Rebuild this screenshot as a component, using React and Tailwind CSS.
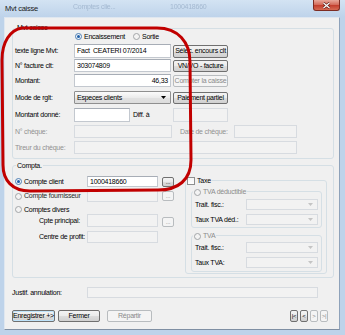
const BTN = "flex items-center justify-center whitespace-nowrap rounded-[2px] border border-[#707070] bg-[linear-gradient(#f3f3f3_0%,#ebebeb_50%,#dddddd_51%,#d0d0d0_100%)] text-black";
const BTN_DIS = "flex items-center justify-center whitespace-nowrap rounded-[2px] border border-[#b8bcbf] bg-[#f4f4f4] text-[#8a8a8a]";
const INPUT = "flex items-center bg-white border border-[#c3c8cf] border-t-[#a7adb6] px-[2px] whitespace-nowrap overflow-hidden";
const INPUT_DIS = "bg-[#f2f2f2] border border-[#d7dbe0]";

function Radio({ checked }) {
  if (checked) {
    return (
      <span className="w-[7px] h-[7px] shrink-0 rounded-full border border-[#4f7fb3] bg-[#eef3f8] flex items-center justify-center">
        <span className="w-[3px] h-[3px] rounded-full bg-[#1f5fa8]" />
      </span>
    );
  }
  return <span className="w-[7px] h-[7px] shrink-0 rounded-full border border-[#a2a5a8] bg-[#f3f3f3]" />;
}

function Arrow({ disabled }) {
  return (
    <svg width="5" height="3" viewBox="0 0 5 3" className="shrink-0">
      <path d="M0 0 L5 0 L2.5 3 Z" fill={disabled ? "#c4c4c4" : "#000"} />
    </svg>
  );
}

export default function App() {
  return (
    <div className="relative w-[345px] h-[335px] overflow-hidden bg-[#bed3ea] flex flex-col font-['Liberation_Sans',Arial,sans-serif] text-[7px] leading-[8px] tracking-[-0.25px] text-black">
      {/* title bar */}
      <div className="h-[17px] shrink-0 flex items-start bg-[linear-gradient(#d3e3f3,#bed3ea)]">
        <div className="w-[73px] pl-[5px] pt-[5px] text-[7.5px] text-[#1a1a1a]">Mvt caisse</div>
        <div className="w-[97px] pt-[3px] text-[#a3b8d0] blur-[0.6px]">Comptes clie...</div>
        <div className="pt-[3px] text-[#a3b8d0] blur-[0.6px]">1000418660</div>
        <div className="ml-auto mr-[5px] w-[27px] h-[11px] rounded-b-[3px] border border-t-0 border-[#7d2c22] bg-[linear-gradient(#e8a89a,#d56e5d_45%,#c3402f_55%,#d66b53)] flex items-center justify-center">
          <svg width="9" height="7" viewBox="0 0 9 7">
            <path d="M1.5 1 L7.5 6 M7.5 1 L1.5 6" stroke="#5a1d15" strokeWidth="2.6" />
            <path d="M1.5 1 L7.5 6 M7.5 1 L1.5 6" stroke="#ffffff" strokeWidth="1.3" />
          </svg>
        </div>
      </div>

      {/* client area */}
      <div className="ml-[4px] mr-[5px] h-[313px] shrink-0 bg-[#f0f0f0] border border-[#dfe7f0] border-b-[#7f8fa3] border-r-[#8ea2ba] flex flex-col">
        {/* Mvt caisse group */}
        <div className="ml-[7px] mt-[10px] w-[322px] h-[131px] shrink-0 border border-[#d5dfe5] rounded-[3px] flex flex-col">
          <div className="-mt-[5px] ml-[3px] w-fit px-[1px] h-[8px] bg-[#f0f0f0]">Mvt caisse</div>
          <div className="h-[9px] flex items-center pl-[62px]">
            <div className="w-[58px] flex items-center gap-[2px]">
              <Radio checked />
              <span>Encaissement</span>
            </div>
            <div className="flex items-center gap-[2px]">
              <Radio />
              <span>Sortie</span>
            </div>
          </div>

          <div className="mt-[3px] h-[14px] flex items-center pl-[2px]">
            <div className="w-[59px]">texte ligne Mvt:</div>
            <div className={INPUT + " w-[97px] h-[14px]"}>Fact&nbsp; CEATERI 07/2014</div>
            <div className={BTN + " ml-[2px] w-[55px] h-[13px]"}>Sélec. encours clt</div>
          </div>

          <div className="mt-[1px] h-[13px] flex items-center pl-[2px]">
            <div className="w-[59px]">N° facture clt:</div>
            <div className={INPUT + " w-[97px] h-[13px]"}>303074809</div>
            <div className={BTN + " ml-[2px] w-[55px] h-[12px]"}>VN/VO - facture</div>
          </div>

          <div className="mt-[2px] h-[13px] flex items-center pl-[2px]">
            <div className="w-[59px]">Montant:</div>
            <div className={INPUT + " w-[97px] h-[13px] justify-end"}>46,33</div>
            <div className={BTN_DIS + " ml-[2px] w-[55px] h-[12px]"}>Compter la caisse</div>
          </div>

          <div className="mt-[4px] h-[13px] flex items-center pl-[2px]">
            <div className="w-[59px]">Mode de rglt:</div>
            <div className="w-[97px] h-[13px] flex items-center justify-between px-[2px] pr-[4px] border border-[#8f8f8f] rounded-[1px] bg-[linear-gradient(#fbfbfb,#ececec_50%,#e2e2e2_51%,#dcdcdc)]">
              <span>Especes clients</span>
              <Arrow />
            </div>
            <div className={BTN + " ml-[2px] w-[55px] h-[12px]"}>Paiement partiel</div>
          </div>

          <div className="mt-[4px] h-[14px] flex items-center pl-[2px]">
            <div className="w-[59px]">Montant donné:</div>
            <div className={INPUT + " w-[56px] h-[14px]"} />
            <div className="ml-[3px] w-[40px]">Diff. à</div>
            <div className={INPUT_DIS + " w-[55px] h-[14px]"} />
          </div>

          <div className="mt-[3px] h-[13px] flex items-center pl-[2px]">
            <div className="w-[59px] text-[#909090]">N° chèque:</div>
            <div className={INPUT_DIS + " w-[98px] h-[13px]"} />
            <div className="ml-[8px] w-[54px] text-[#909090]">Date de chèque:</div>
            <div className={INPUT_DIS + " w-[63px] h-[13px]"} />
          </div>

          <div className="mt-[3px] h-[13px] flex items-center pl-[2px]">
            <div className="w-[59px] text-[#909090]">Tireur du chèque:</div>
            <div className={INPUT_DIS + " w-[223px] h-[13px]"} />
          </div>
        </div>

        {/* Compta group */}
        <div className="ml-[7px] mt-[6px] w-[322px] h-[113px] shrink-0 border border-[#d5dfe5] rounded-[3px] flex flex-col">
          <div className="-mt-[4px] ml-[3px] w-fit px-[1px] h-[8px] bg-[#f0f0f0]">Compta.</div>
          <div className="flex">
            {/* left column */}
            <div className="w-[172px] pl-[2px] flex flex-col">
              <div className="mt-[6px] h-[11px] flex items-center">
                <div className="w-[72px] flex items-center gap-[2px]">
                  <Radio checked />
                  <span>Compte client</span>
                </div>
                <div className={INPUT + " w-[71px] h-[11px]"}>1000418660</div>
                <div className={BTN + " ml-[4px] w-[12px] h-[10px] text-[6px]"}>...</div>
              </div>
              <div className="mt-[3px] h-[12px] flex items-center">
                <div className="w-[72px] flex items-center gap-[2px] text-[#2a2a2a]">
                  <Radio />
                  <span>Compte fournisseur</span>
                </div>
                <div className={INPUT_DIS + " w-[71px] h-[12px]"} />
                <div className={BTN_DIS + " ml-[4px] w-[12px] h-[10px] text-[6px]"}>...</div>
              </div>
              <div className="mt-[3px] h-[9px] flex items-center">
                <div className="w-[72px] flex items-center gap-[2px]">
                  <Radio />
                  <span>Comptes divers</span>
                </div>
              </div>
              <div className="h-[13px] flex items-center">
                <div className="w-[72px] pl-[24px]">Cpte principal:</div>
                <div className={INPUT_DIS + " w-[71px] h-[13px]"} />
                <div className={BTN_DIS + " ml-[4px] w-[12px] h-[10px] text-[6px] self-end"}>...</div>
              </div>
              <div className="mt-[4px] h-[12px] flex items-center">
                <div className="w-[72px] pl-[24px]">Centre de profit:</div>
                <div className={INPUT_DIS + " w-[71px] h-[12px]"} />
              </div>
            </div>

            {/* Taxe group */}
            <div className="mt-[10px] w-[142px] h-[94px] border border-[#d5dfe5] rounded-[3px] flex flex-col">
              <div className="-mt-[4px] w-fit px-[1px] h-[8px] bg-[#f0f0f0] flex items-center gap-[2px]">
                <span className="w-[8px] h-[8px] border border-[#8e8f8f] bg-[linear-gradient(#f4f4f4,#ffffff)]" />
                <span>Taxe</span>
              </div>

              <div className="ml-[5px] mt-[6px] w-[131px] h-[37px] border border-[#d5dfe5] rounded-[3px] flex flex-col">
                <div className="-mt-[4px] ml-[1px] w-fit px-[1px] h-[8px] bg-[#f0f0f0] flex items-center gap-[2px] text-[#8c8c8c]">
                  <Radio />
                  <span>TVA déductible</span>
                </div>
                <div className="mt-[3px] h-[11px] flex items-center pl-[3px]">
                  <div className="w-[51px]">Trait. fisc.:</div>
                  <div className={INPUT_DIS + " w-[72px] h-[11px] flex items-center justify-end pr-[4px]"}>
                    <Arrow disabled />
                  </div>
                </div>
                <div className="mt-[4px] h-[11px] flex items-center pl-[3px]">
                  <div className="w-[51px]">Taux TVA déd.:</div>
                  <div className={INPUT_DIS + " w-[72px] h-[11px] flex items-center justify-end pr-[4px]"}>
                    <Arrow disabled />
                  </div>
                </div>
              </div>

              <div className="ml-[5px] mt-[7px] w-[131px] h-[37px] border border-[#d5dfe5] rounded-[3px] flex flex-col">
                <div className="-mt-[4px] ml-[1px] w-fit px-[1px] h-[8px] bg-[#f0f0f0] flex items-center gap-[2px] text-[#8c8c8c]">
                  <Radio />
                  <span>TVA</span>
                </div>
                <div className="mt-[2px] h-[11px] flex items-center pl-[3px]">
                  <div className="w-[51px]">Trait. fisc.:</div>
                  <div className={INPUT_DIS + " w-[72px] h-[11px] flex items-center justify-end pr-[4px]"}>
                    <Arrow disabled />
                  </div>
                </div>
                <div className="mt-[4px] h-[11px] flex items-center pl-[3px]">
                  <div className="w-[51px]">Taux TVA:</div>
                  <div className={INPUT_DIS + " w-[72px] h-[11px] flex items-center justify-end pr-[4px]"}>
                    <Arrow disabled />
                  </div>
                </div>
              </div>
            </div>
          </div>
        </div>

        {/* Justif */}
        <div className="mt-[9px] h-[11px] flex items-center ml-[7px]">
          <div className="w-[75px]">Justif. annulation:</div>
          <div className={INPUT_DIS + " w-[231px] h-[11px]"} />
        </div>

        {/* Buttons */}
        <div className="mt-[12px] h-[12px] flex items-center ml-[7px] mr-[11px]">
          <div className={BTN + " w-[43px] h-[12px] border-[#3c7fb1] shadow-[inset_0_0_0_1px_#bfe4fb]"}>Enregistrer +&gt;</div>
          <div className={BTN + " ml-[3px] w-[42px] h-[12px]"}>Fermer</div>
          <div className={BTN_DIS + " ml-[7px] w-[45px] h-[12px]"}>Répartir</div>
          <div className="ml-auto flex gap-[2px]">
            <div className={BTN + " w-[8px] h-[12px] text-[6px]"}>|&lt;</div>
            <div className={BTN + " w-[8px] h-[12px] text-[6px]"}>&lt;</div>
            <div className={BTN_DIS + " w-[8px] h-[12px] text-[6px]"}>&gt;</div>
            <div className={BTN_DIS + " w-[8px] h-[12px] text-[6px]"}>&gt;|</div>
          </div>
        </div>
      </div>

      {/* red hand-drawn annotation */}
      <svg className="absolute left-0 top-0 pointer-events-none" width="345" height="335" viewBox="0 0 345 335">
        <path
          d="M22 28 L157 28 C178 28 190 42 190 62 L191 160 C191 180 178 190 158 190 L30 191 C12 191 3 180 3 165 L2 60 C2 42 10 30 22 28 Z"
          fill="none"
          stroke="#c10000"
          strokeWidth="3"
        />
      </svg>
    </div>
  );
}
